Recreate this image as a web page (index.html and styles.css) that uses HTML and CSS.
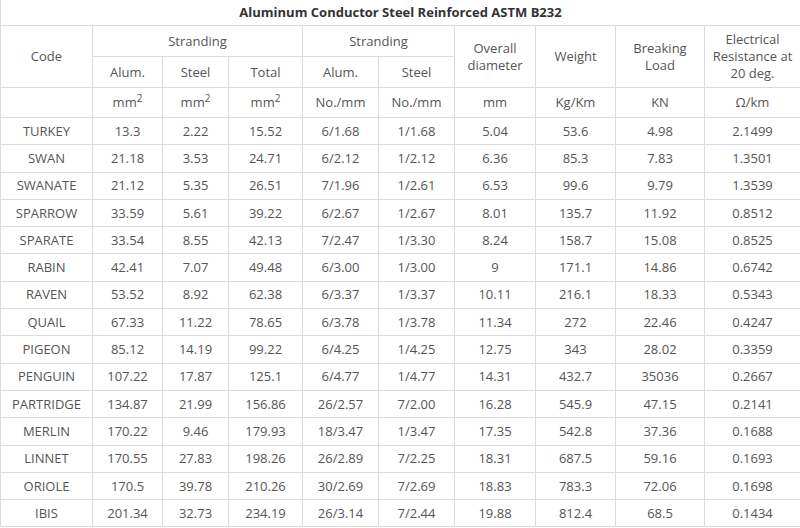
FILE: index.html
```html
<!DOCTYPE html>
<html>
<head>
<meta charset="utf-8">
<link rel="stylesheet" href="styles.css">
</head>
<body>
<table class="spec">
<colgroup>
<col class="c1"><col class="c2"><col class="c3"><col class="c4"><col class="c5"><col class="c6"><col class="c7"><col class="c8"><col class="c9"><col class="c10">
</colgroup>
<thead>
<tr class="title"><th colspan="10">Aluminum Conductor Steel Reinforced ASTM B232</th></tr>
<tr class="h1"><td rowspan="2">Code</td><td colspan="3">Stranding</td><td colspan="2">Stranding</td><td rowspan="2">Overall<br>diameter</td><td rowspan="2">Weight</td><td rowspan="2">Breaking<br>Load</td><td rowspan="2">Electrical<br>Resistance at<br>20 deg.</td></tr>
<tr class="h2"><td>Alum.</td><td>Steel</td><td>Total</td><td>Alum.</td><td>Steel</td></tr>
<tr class="units"><td></td><td>mm<sup>2</sup></td><td>mm<sup>2</sup></td><td>mm<sup>2</sup></td><td>No./mm</td><td>No./mm</td><td>mm</td><td>Kg/Km</td><td>KN</td><td>Ω/km</td></tr>
</thead>
<tbody>
<tr><td>TURKEY</td><td>13.3</td><td>2.22</td><td>15.52</td><td>6/1.68</td><td>1/1.68</td><td>5.04</td><td>53.6</td><td>4.98</td><td>2.1499</td></tr>
<tr><td>SWAN</td><td>21.18</td><td>3.53</td><td>24.71</td><td>6/2.12</td><td>1/2.12</td><td>6.36</td><td>85.3</td><td>7.83</td><td>1.3501</td></tr>
<tr><td>SWANATE</td><td>21.12</td><td>5.35</td><td>26.51</td><td>7/1.96</td><td>1/2.61</td><td>6.53</td><td>99.6</td><td>9.79</td><td>1.3539</td></tr>
<tr><td>SPARROW</td><td>33.59</td><td>5.61</td><td>39.22</td><td>6/2.67</td><td>1/2.67</td><td>8.01</td><td>135.7</td><td>11.92</td><td>0.8512</td></tr>
<tr><td>SPARATE</td><td>33.54</td><td>8.55</td><td>42.13</td><td>7/2.47</td><td>1/3.30</td><td>8.24</td><td>158.7</td><td>15.08</td><td>0.8525</td></tr>
<tr><td>RABIN</td><td>42.41</td><td>7.07</td><td>49.48</td><td>6/3.00</td><td>1/3.00</td><td>9</td><td>171.1</td><td>14.86</td><td>0.6742</td></tr>
<tr><td>RAVEN</td><td>53.52</td><td>8.92</td><td>62.38</td><td>6/3.37</td><td>1/3.37</td><td>10.11</td><td>216.1</td><td>18.33</td><td>0.5343</td></tr>
<tr><td>QUAIL</td><td>67.33</td><td>11.22</td><td>78.65</td><td>6/3.78</td><td>1/3.78</td><td>11.34</td><td>272</td><td>22.46</td><td>0.4247</td></tr>
<tr><td>PIGEON</td><td>85.12</td><td>14.19</td><td>99.22</td><td>6/4.25</td><td>1/4.25</td><td>12.75</td><td>343</td><td>28.02</td><td>0.3359</td></tr>
<tr><td>PENGUIN</td><td>107.22</td><td>17.87</td><td>125.1</td><td>6/4.77</td><td>1/4.77</td><td>14.31</td><td>432.7</td><td>35036</td><td>0.2667</td></tr>
<tr><td>PARTRIDGE</td><td>134.87</td><td>21.99</td><td>156.86</td><td>26/2.57</td><td>7/2.00</td><td>16.28</td><td>545.9</td><td>47.15</td><td>0.2141</td></tr>
<tr><td>MERLIN</td><td>170.22</td><td>9.46</td><td>179.93</td><td>18/3.47</td><td>1/3.47</td><td>17.35</td><td>542.8</td><td>37.36</td><td>0.1688</td></tr>
<tr><td>LINNET</td><td>170.55</td><td>27.83</td><td>198.26</td><td>26/2.89</td><td>7/2.25</td><td>18.31</td><td>687.5</td><td>59.16</td><td>0.1693</td></tr>
<tr><td>ORIOLE</td><td>170.5</td><td>39.78</td><td>210.26</td><td>30/2.69</td><td>7/2.69</td><td>18.83</td><td>783.3</td><td>72.06</td><td>0.1698</td></tr>
<tr><td>IBIS</td><td>201.34</td><td>32.73</td><td>234.19</td><td>26/3.14</td><td>7/2.44</td><td>19.88</td><td>812.4</td><td>68.5</td><td>0.1434</td></tr>
</tbody>
</table>
</body>
</html>
```
FILE: styles.css
```css
html, body {
  margin: 0;
  padding: 0;
  background: #ffffff;
}
.spec {
  width: 800px;
  table-layout: fixed;
  border-collapse: collapse;
  font-family: "Open Sans", "Noto Sans", sans-serif;
  font-size: 13px;
  color: #555555;
}
.c1 { width: 92px; }
.c2 { width: 70px; }
.c3 { width: 66px; }
.c4 { width: 74px; }
.c5 { width: 76px; }
.c6 { width: 76px; }
.c7 { width: 81px; }
.c8 { width: 80px; }
.c9 { width: 89px; }
.c10 { width: 96px; }
.spec th, .spec td {
  border: 1px solid #dcdcdc;
  text-align: center;
  vertical-align: middle;
  padding: 0;
  line-height: 17px;
  font-weight: normal;
}
.spec .title th {
  font-weight: bold;
  color: #333333;
  height: 25px;
  border-top: none;
}
.spec .h1 td { height: 30px; }
.spec .h2 td { height: 30px; }
.spec .units td { height: 29px; }
.spec tbody td { height: 26.3px; }
.spec sup {
  font-size: 10px;
  line-height: 0;
  vertical-align: 5px;
}
```
